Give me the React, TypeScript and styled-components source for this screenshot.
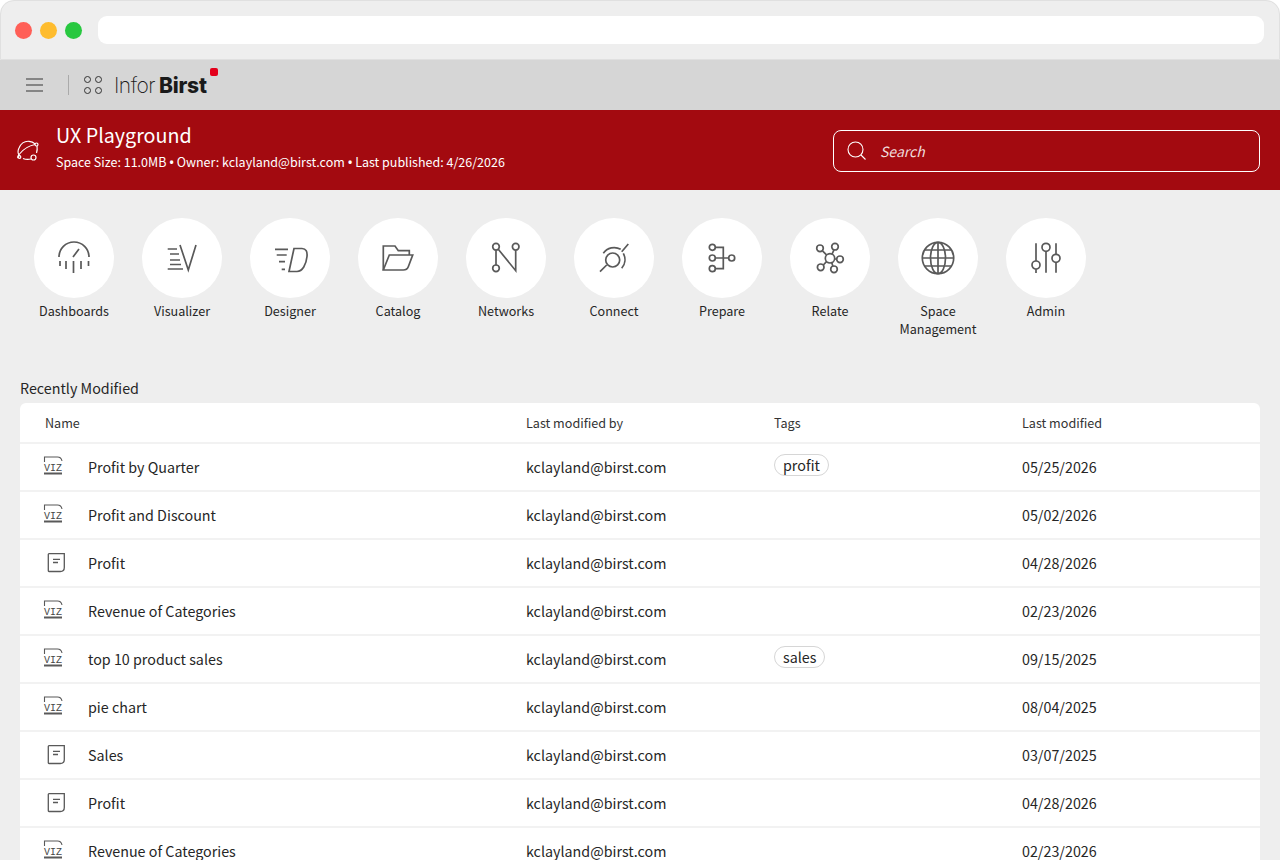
import React from 'react';
import styled, { createGlobalStyle } from 'styled-components';

const GlobalStyle = createGlobalStyle`
  html, body {
    margin: 0;
    padding: 0;
    background: #fff;
    overflow: hidden;
  }
  * {
    box-sizing: border-box;
  }
`;

const FONT = `"Noto Sans CJK SC", "Noto Sans", sans-serif`;

const Icon = ({ children }: { children: React.ReactNode }) => (
  <svg width="40" height="40" viewBox="0 0 40 40" fill="none" stroke="#595959" strokeWidth="1.7">
    {children}
  </svg>
);

const launchers = [
  {
    label: 'Dashboards',
    icon: (
      <Icon>
        <path d="M5 19a15 15 0 0 1 30 0" />
        <path d="M19 19l6-8M6 23v5M12 23v8M19.500 23v12M27 23v8M34.500 23v5" />
      </Icon>
    ),
  },
  {
    label: 'Visualizer',
    icon: (
      <Icon>
        <path d="M5.700 11H15M8 16h9M8 22h10M8 26.500h11M5.700 31H21" />
        <path d="M18 7l8.300 25L34 7" />
      </Icon>
    ),
  },
  {
    label: 'Designer',
    icon: (
      <Icon>
        <path d="M5 11.300h13M6.700 17h10M9 23.700h6M11.700 31.300H15" />
        <path d="M24 10.500h8c4 0 5.500 3 5 8-.8 8-4.500 15-10 15h-8L24 10.500z" />
      </Icon>
    ),
  },
  {
    label: 'Catalog',
    icon: (
      <Icon>
        <path d="M5.300 32V8H17l3.300 4.700h11V17" />
        <path d="M5.300 32l6-15h23.400l-4.400 11.700c-.8 2-2.500 3.300-5 3.300H5.300z" />
      </Icon>
    ),
  },
  {
    label: 'Networks',
    icon: (
      <Icon>
        <circle cx="10" cy="8.700" r="3.300" />
        <circle cx="29.700" cy="8.700" r="3.300" />
        <circle cx="10" cy="30.300" r="3.300" />
        <path d="M10 12v15M12.300 11.300l17.400 21.400V12" />
      </Icon>
    ),
  },
  {
    label: 'Connect',
    icon: (
      <Icon>
        <circle cx="18.700" cy="22" r="7" />
        <path d="M6 33.700l6.700-6.700M27.700 13.700L34.300 6" />
        <path d="M9.300 15.300a13.300 13.300 0 0 1 17.400-4M29.300 15.300a13.300 13.300 0 0 1-1.600 15" />
      </Icon>
    ),
  },
  {
    label: 'Prepare',
    icon: (
      <Icon>
        <circle cx="10.300" cy="9.300" r="3" />
        <circle cx="10.300" cy="20" r="3" />
        <circle cx="10.300" cy="30.700" r="3" />
        <circle cx="29.700" cy="20" r="3" />
        <path d="M13.300 9.300h8v21.400h-8M13.300 20h13.400" />
      </Icon>
    ),
  },
  {
    label: 'Relate',
    icon: (
      <Icon>
        <circle cx="20" cy="20.300" r="4.700" />
        <circle cx="10" cy="10.300" r="3.300" />
        <circle cx="25" cy="8.700" r="3.300" />
        <circle cx="30" cy="21.300" r="3.300" />
        <circle cx="24" cy="31.300" r="3.300" />
        <circle cx="10.700" cy="29.300" r="3.300" />
        <path d="M12.500 12.800l4 4M24 11.800l-2 4.300M26.700 21h-2M22.800 28l-1-3.300M13.300 27l3.200-3.300" />
      </Icon>
    ),
  },
  {
    label: 'Space Management',
    icon: (
      <Icon>
        <circle cx="20" cy="20" r="15.700" />
        <ellipse cx="20" cy="20" rx="7.500" ry="15.700" />
        <path d="M20 4.300v31.400M4.300 20h31.400M6.500 12h27M6.500 28h27" />
      </Icon>
    ),
  },
  {
    label: 'Admin',
    icon: (
      <Icon>
        <circle cx="10" cy="27" r="4" />
        <circle cx="20" cy="9.300" r="4" />
        <circle cx="30" cy="20.300" r="4" />
        <path d="M10 5.300V23M10 31v4M20 13.300v21.400M30 5.300v11M30 24.300v10.400" />
      </Icon>
    ),
  },
];

type Kind = 'viz' | 'doc';

const rows: { kind: Kind; name: string; tag?: string; date: string }[] = [
  { kind: 'viz', name: 'Profit by Quarter', tag: 'profit', date: '05/25/2026' },
  { kind: 'viz', name: 'Profit and Discount', date: '05/02/2026' },
  { kind: 'doc', name: 'Profit', date: '04/28/2026' },
  { kind: 'viz', name: 'Revenue of Categories', date: '02/23/2026' },
  { kind: 'viz', name: 'top 10 product sales', tag: 'sales', date: '09/15/2025' },
  { kind: 'viz', name: 'pie chart', date: '08/04/2025' },
  { kind: 'doc', name: 'Sales', date: '03/07/2025' },
  { kind: 'doc', name: 'Profit', date: '04/28/2026' },
  { kind: 'viz', name: 'Revenue of Categories', date: '02/23/2026' },
];

const VizIcon = () => (
  <svg width="24" height="24" viewBox="0 0 24 24" fill="none" stroke="#595959">
    <path d="M1.500 7V2h13c2.500 0 4 1.500 4.500 4" strokeWidth="1.100" />
    <VizText x="1" y="15.500" textLength="18" lengthAdjust="spacingAndGlyphs">
      VIZ
    </VizText>
    <path d="M1 18.500h18" strokeWidth="2" />
  </svg>
);

const DocIcon = () => (
  <svg width="24" height="24" viewBox="0 0 24 24" fill="none" stroke="#595959" strokeWidth="1.300">
    <path d="M6 2.700h15.300v13.800c0 2.500-1.500 4-4 4H6a.7.700 0 0 1-.7-.7V3.400a.7.700 0 0 1 .7-.7z" />
    <path d="M10 8.300h7M10 11.500h5" />
  </svg>
);

const App = () => (
  <Page>
    <GlobalStyle />
    <TitleBar>
      <Lights>
        <Light color="#ff5f57" />
        <Light color="#febc2e" />
        <Light color="#28c840" />
      </Lights>
      <AddressBar />
    </TitleBar>

    <NavBar>
      <Burger>
        <span />
        <span />
        <span />
      </Burger>
      <NavDivider />
      <Apps>
        <i />
        <i />
        <i />
        <i />
      </Apps>
      <Logo>
        <LogoLight>Infor</LogoLight>
        <LogoBold>Birst</LogoBold>
        <LogoDot />
      </Logo>
    </NavBar>

    <SpaceHeader>
      <SpaceIcon>
        <svg width="24" height="24" viewBox="0 0 24 24" fill="none" stroke="#fff" strokeWidth="1.200">
          <path d="M3.500 18c-1.500-2-2-5-.5-8C5 5.500 9 3 13 3.300c2.500.2 4.500 1 6 2.500" />
          <path d="M7 20.500c2.500 1 5 1.200 8 .5" />
          <path d="M2 20c-1-1 0-2 1.500-4C7 11.500 12 8 19 6.500" />
          <path d="M21 8c.5 3 .2 5-.5 7" />
          <circle cx="20.500" cy="6.500" r="1.500" />
          <circle cx="17.500" cy="19.500" r="2.500" />
          <circle cx="3.500" cy="19" r="1.300" />
        </svg>
      </SpaceIcon>
      <SpaceInfo>
        <SpaceTitle>UX Playground</SpaceTitle>
        <SpaceMeta>
          Space Size: 11.0MB <Bullet>•</Bullet> Owner: kclayland@birst.com <Bullet>•</Bullet> Last published: 4/26/2026
        </SpaceMeta>
      </SpaceInfo>
      <SearchBox>
        <svg width="20" height="20" viewBox="0 0 20 20" fill="none" stroke="#fff" strokeWidth="1.100">
          <circle cx="8.500" cy="8.500" r="7.500" />
          <path d="M14 14l4.500 4.500" />
        </svg>
        <SearchText>Search</SearchText>
      </SearchBox>
    </SpaceHeader>

    <Body>
      <Launchers>
        {launchers.map(item => (
          <Launcher key={item.label}>
            <Circle>{item.icon}</Circle>
            <LauncherLabel>{item.label}</LauncherLabel>
          </Launcher>
        ))}
      </Launchers>

      <SectionTitle>Recently Modified</SectionTitle>
      <Table>
        <HeaderRow>
          <HeaderName>Name</HeaderName>
          <span>Last modified by</span>
          <span>Tags</span>
          <span>Last modified</span>
        </HeaderRow>
        {rows.map((row, i) => (
          <Row key={i}>
            <NameCell>
              <IconSlot>{row.kind === 'viz' ? <VizIcon /> : <DocIcon />}</IconSlot>
              {row.name}
            </NameCell>
            <span>kclayland@birst.com</span>
            <span>{row.tag && <Tag>{row.tag}</Tag>}</span>
            <span>{row.date}</span>
          </Row>
        ))}
      </Table>
    </Body>
  </Page>
);

export default App;

const Page = styled.div`
  width: 1280px;
  height: 860px;
  overflow: hidden;
  background: #eeeeee;
  border-radius: 14px 14px 0 0;
  font-family: ${FONT};
`;

const TitleBar = styled.div`
  height: 60px;
  display: flex;
  align-items: center;
  gap: 16px;
  padding: 0 15px 0 14px;
  border: 1px solid #e0e0e0;
  border-radius: 14px 14px 0 0;
`;

const Lights = styled.div`
  display: flex;
  gap: 8px;
`;

const Light = styled.div<{ color: string }>`
  width: 17px;
  height: 17px;
  border-radius: 50%;
  background: ${props => props.color};
`;

const AddressBar = styled.div`
  flex: 1;
  height: 28px;
  background: #fff;
  border-radius: 9px;
`;

const NavBar = styled.div`
  height: 50px;
  display: flex;
  align-items: center;
  background: #d6d6d6;
  padding-left: 26px;
`;

const Burger = styled.div`
  width: 17px;
  display: flex;
  flex-direction: column;
  gap: 4px;
  & span {
    height: 2px;
    background: #858585;
  }
`;

const NavDivider = styled.div`
  width: 1px;
  height: 20px;
  margin: 0 15px 0 25px;
  background: #aaa;
`;

const Apps = styled.div`
  display: grid;
  grid-template-columns: 7px 7px;
  gap: 4px;
  & i {
    width: 7px;
    height: 7px;
    border: 1px solid #333;
    border-radius: 50%;
  }
`;

const Logo = styled.div`
  position: relative;
  display: flex;
  align-items: baseline;
  margin-left: 12px;
  color: #1a1a1a;
  font-family: Inter, sans-serif;
  font-size: 21px;
`;

const LogoLight = styled.span`
  font-weight: 200;
  letter-spacing: -0.5px;
  margin-right: 4px;
`;

const LogoBold = styled.span`
  font-weight: 800;
  letter-spacing: -0.2px;
`;

const LogoDot = styled.span`
  position: absolute;
  top: -5px;
  right: -11px;
  width: 8px;
  height: 8px;
  border-radius: 2px;
  background: #e3001b;
`;

const SpaceHeader = styled.div`
  height: 80px;
  display: flex;
  align-items: center;
  background: #a30a10;
  color: #fff;
  padding: 0 20px 0 16px;
`;

const SpaceIcon = styled.div`
  width: 40px;
  display: flex;
`;

const SpaceInfo = styled.div`
  flex: 1;
  display: flex;
  flex-direction: column;
  gap: 4px;
  padding-bottom: 8px;
`;

const SpaceTitle = styled.div`
  font-size: 19.700px;
  line-height: 28px;
`;

const SpaceMeta = styled.div`
  font-size: 12.500px;
  line-height: 18px;
`;

const Bullet = styled.span`
  font-family: "Noto Sans", sans-serif;
  font-weight: 600;
`;

const SearchBox = styled.div`
  width: 427px;
  height: 42px;
  margin-top: 2px;
  display: flex;
  align-items: center;
  gap: 13px;
  padding-left: 13px;
  border: 1px solid #fff;
  border-radius: 8px;
`;

const SearchText = styled.span`
  font-size: 14px;
  font-style: italic;
  color: #f0dcdc;
`;

const Body = styled.div`
  padding: 28px 20px 0;
`;

const Launchers = styled.div`
  display: flex;
  height: 160px;
`;

const Launcher = styled.div`
  width: 108px;
  display: flex;
  flex-direction: column;
  align-items: center;
`;

const Circle = styled.div`
  width: 80px;
  height: 80px;
  display: flex;
  align-items: center;
  justify-content: center;
  background: #fff;
  border-radius: 50%;
`;

const LauncherLabel = styled.div`
  width: 90px;
  margin-top: 4px;
  font-size: 12.600px;
  line-height: 18px;
  color: #262626;
  text-align: center;
`;

const SectionTitle = styled.div`
  font-size: 14.300px;
  line-height: 20px;
  margin-bottom: 5px;
  color: #262626;
`;

const Table = styled.div`
  background: #fff;
  border-radius: 6px 6px 0 0;
`;

const HeaderRow = styled.div`
  display: grid;
  grid-template-columns: 506px 248px 248px 1fr;
  align-items: center;
  height: 41px;
  font-size: 12.600px;
  line-height: 18px;
  color: #333;
  border-bottom: 2px solid #f2f2f2;
`;

const HeaderName = styled.span`
  padding-left: 25px;
`;

const Row = styled.div`
  display: grid;
  grid-template-columns: 506px 248px 248px 1fr;
  align-items: center;
  height: 48px;
  padding-bottom: 1px;
  font-size: 14.300px;
  line-height: 22px;
  color: #262626;
  border-bottom: 2px solid #f2f2f2;
`;

const NameCell = styled.span`
  display: flex;
  align-items: center;
  padding-left: 23px;
`;

const IconSlot = styled.span`
  width: 45px;
  display: flex;
`;

const VizText = styled.text`
  font-family: "Liberation Mono", monospace;
  font-size: 11.500px;
  fill: #454545;
  stroke: none;
`;

const Tag = styled.span`
  display: inline-block;
  height: 22px;
  padding: 0 8px;
  line-height: 20px;
  border: 1px solid #d6d6d6;
  border-radius: 11px;
  position: relative;
  top: -2px;
`;
